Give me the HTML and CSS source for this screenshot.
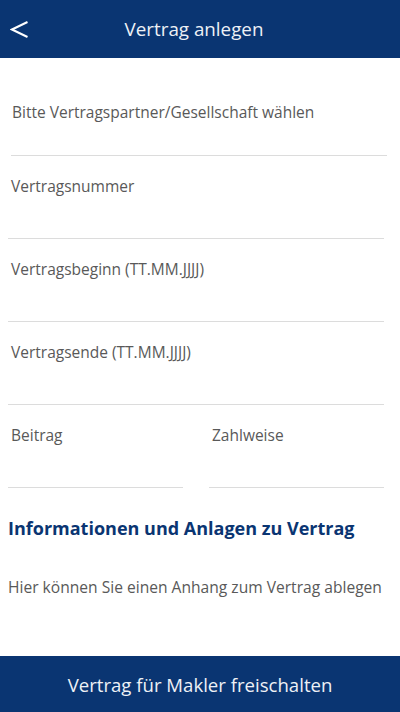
FILE: index.html
```html
<!DOCTYPE html>
<html>
<head>
    <meta charset="UTF-8">
    <title>Vertrag anlegen</title>
    <link rel="stylesheet" href="styles.css">
</head>
<body>
    <div class="page">
        <div class="header">
            <span class="back">
                <svg width="20" height="20" viewBox="0 0 20 20">
                    <polyline points="17.5,2 2,9.5 17.5,17" fill="none" stroke="#fff" stroke-width="2"/>
                </svg>
            </span>
            <h1>Vertrag anlegen</h1>
        </div>

        <div class="content">
            <div class="field first">
                <label>Bitte Vertragspartner/Gesellschaft wählen</label>
            </div>
            <div class="field">
                <label>Vertragsnummer</label>
            </div>
            <div class="field">
                <label>Vertragsbeginn (TT.MM.JJJJ)</label>
            </div>
            <div class="field">
                <label>Vertragsende (TT.MM.JJJJ)</label>
            </div>
            <div class="field-row">
                <div class="field">
                    <label>Beitrag</label>
                </div>
                <div class="field">
                    <label>Zahlweise</label>
                </div>
            </div>

            <h2>Informationen und Anlagen zu Vertrag</h2>
            <p class="hint">Hier können Sie einen Anhang zum Vertrag ablegen</p>
        </div>

        <div class="footer">Vertrag für Makler freischalten</div>
    </div>
</body>
</html>
```
FILE: styles.css
```css
body {
    margin: 0;
    font-family: "Open Sans", "Liberation Sans", sans-serif;
    background: #fff;
}
.page {
    width: 400px;
    height: 712px;
    display: flex;
    flex-direction: column;
}
.header {
    height: 58px;
    background: #0a3572;
    display: flex;
    align-items: center;
    justify-content: center;
    padding-right: 12px;
    position: relative;
}
.header h1 {
    margin: 0;
    font-size: 18.8px;
    font-weight: 400;
    color: #eef1f6;
}
.back {
    position: absolute;
    left: 10px;
    top: 20px;
    width: 20px;
    height: 20px;
}
.content {
    flex: 1;
    padding: 24px 16px 0 8px;
}
.field {
    padding: 19px 0 41px;
    border-bottom: 1px solid #dcdcdc;
}
.field.first {
    margin: 0 -3px 0 3px;
    padding-bottom: 32px;
}
.field label {
    display: block;
    font-size: 15.5px;
    line-height: 22px;
    color: #595959;
    padding-left: 3px;
}
.field.first label {
    padding-left: 1px;
}
.field-row {
    display: flex;
    gap: 26px;
}
.field-row .field {
    flex: 1;
}
h2 {
    margin: 28px 0 0;
    font-size: 18px;
    line-height: 24px;
    font-weight: 700;
    color: #0a3572;
}
.hint {
    margin: 36px 0 0;
    font-size: 15.6px;
    line-height: 22px;
    color: #595959;
}
.footer {
    height: 56px;
    background: #0a3572;
    color: #eef1f6;
    font-size: 18.6px;
    display: flex;
    align-items: center;
    justify-content: center;
}
```
